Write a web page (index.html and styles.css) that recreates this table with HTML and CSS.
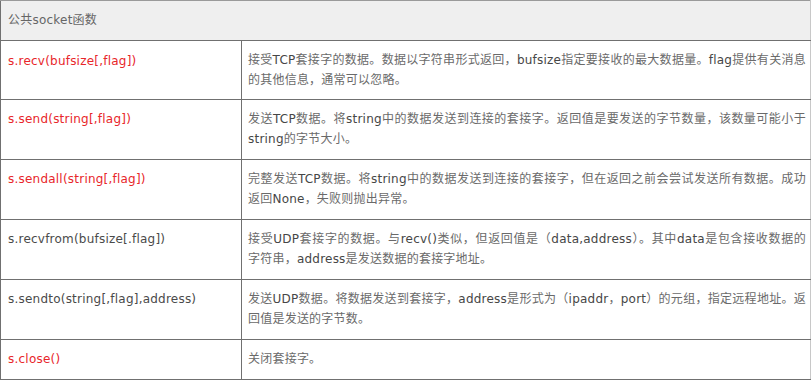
FILE: index.html
```html
<!DOCTYPE html>
<html lang="zh">
<head>
<meta charset="utf-8">
<title>公共socket函数</title>
<link rel="stylesheet" href="styles.css">
</head>
<body>
<table class="api">
  <colgroup>
    <col class="col-name">
    <col class="col-desc">
  </colgroup>
  <thead>
    <tr><th colspan="2" class="head">公共<span class="en">socket</span>函数</th></tr>
  </thead>
  <tbody>
    <tr class="r1">
      <td class="fn red">s.recv(bufsize[,flag])</td>
      <td class="desc">接受<span class="en">TCP</span>套接字的数据。数据以字符串形式返回，<span class="en">bufsize</span>指定要接收的最大数据量。<span class="en">flag</span>提供有关消息的其他信息，通常可以忽略。</td>
    </tr>
    <tr>
      <td class="fn red">s.send(string[,flag])</td>
      <td class="desc">发送<span class="en">TCP</span>数据。将<span class="en">string</span>中的数据发送到连接的套接字。返回值是要发送的字节数量，该数量可能小于<span class="en">string</span>的字节大小。</td>
    </tr>
    <tr>
      <td class="fn red">s.sendall(string[,flag])</td>
      <td class="desc">完整发送<span class="en">TCP</span>数据。将<span class="en">string</span>中的数据发送到连接的套接字，但在返回之前会尝试发送所有数据。成功<span class="word">返回</span><span class="en">None</span>，失败则抛出异常。</td>
    </tr>
    <tr>
      <td class="fn">s.recvfrom(bufsize[.flag])</td>
      <td class="desc">接受<span class="en">UDP</span>套接字的数据。与<span class="en">recv()</span>类似，但返回值是（<span class="en">data,address</span>）。其中<span class="en">data</span>是包含接收数据的<span class="word">字符串</span>，<span class="en">address</span>是发送数据的套接字地址。</td>
    </tr>
    <tr>
      <td class="fn">s.sendto(string[,flag],address)</td>
      <td class="desc">发送<span class="en">UDP</span>数据。将数据发送到套接字，<span class="en">address</span>是形式为（<span class="en">ipaddr</span>，<span class="en">port</span>）的元组，指定远程地址。返回值是发送的字节数。</td>
    </tr>
    <tr class="last">
      <td class="fn red">s.close()</td>
      <td class="desc">关闭套接字。</td>
    </tr>
  </tbody>
</table>
</body>
</html>
```

FILE: styles.css
```css
html, body {
  margin: 0;
  padding: 0;
  background: #ffffff;
}

.api {
  width: 811px;
  border-collapse: collapse;
  table-layout: fixed;
  font-family: "DejaVu Sans", Verdana, "Noto Sans CJK SC", sans-serif;
  font-size: 12px;
  letter-spacing: 0.22px;
  line-height: 20px;
  color: #666666;
}

.col-name { width: 241px; }

.api th,
.api td {
  border: 1px solid #707070;
  padding: 9px 8px 10px 7px;
  text-align: left;
  vertical-align: top;
}

.api .head {
  background: #efefef;
  font-weight: normal;
  color: #666666;
  border-top-color: #9a9a9a;
  border-right-color: #c8c8c8;
}

.api td.desc {
  padding-left: 6px;
  padding-right: 4px;
  text-align: justify;
  border-right-color: #c8c8c8;
  color: #6a6a6a;
}

.en {
  color: #464646;
}

.api .head .en {
  color: #666666;
}

.word {
  white-space: nowrap;
}

.api .r1 td {
  padding-top: 9px;
  padding-bottom: 9px;
}

.fn {
  padding-top: 10px;
  color: #4a4a4a;
}

.api .r1 td.fn {
  padding-top: 10px;
  padding-bottom: 8px;
}

.fn.red {
  color: #e8262a;
}
```
